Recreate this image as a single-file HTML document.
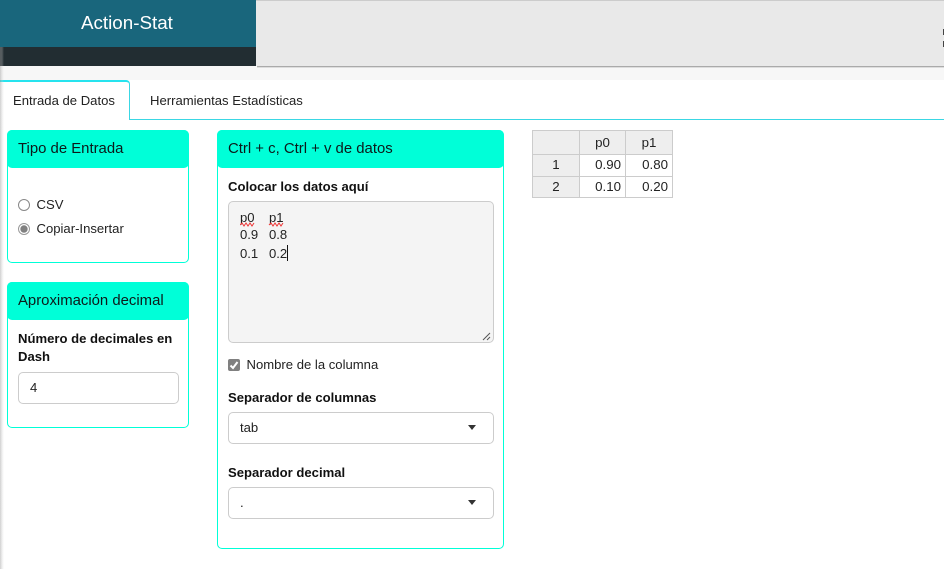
<!DOCTYPE html>
<html><head><meta charset="utf-8"><style>
html,body{margin:0;padding:0;background:#fff}
body{width:944px;height:569px;overflow:hidden;position:relative;font-family:"Liberation Sans",sans-serif;font-size:13.1px;color:#222}
.a{position:absolute;white-space:nowrap}
.box{position:absolute;box-sizing:border-box;border:1px solid #00ffd8;border-radius:5px;background:#fff}
.hd{position:absolute;left:-1px;right:-1px;top:-1px;height:38px;background:#00ffd8;border-radius:5px;font-size:14.9px;line-height:38px;padding-left:11px;color:#0c1a1a;box-sizing:border-box}
.b{font-weight:bold;color:#111}
.in{position:absolute;box-sizing:border-box;border:1px solid #ccc;border-radius:5px;background:#fff}
.car{position:absolute;width:0;height:0;border-left:4.500px solid transparent;border-right:4.500px solid transparent;border-top:5px solid #333}
.c{position:absolute;box-sizing:border-box;border:1px solid #ccc;line-height:19px;text-align:right;padding-right:4px;background:#fff;color:#222;font-size:13.3px}
.g{background:#eee;text-align:center;padding:0}
</style></head><body>
<div class="a" style="left:0;top:66px;width:944px;height:14px;background:#f7f7f7"></div>
<div class="a" style="left:0;top:47px;width:256px;height:19px;background:#222d32"></div>
<div class="a" style="left:0;top:0;width:256px;height:47px;background:#19667c"></div>
<div class="a" style="left:256px;top:0;width:688px;height:66px;background:#e9e9e9;border-top:1px solid #ccc;box-sizing:border-box"></div>
<div class="a" style="left:257px;top:66px;width:687px;height:1px;background:#aaa"></div>
<div class="a" style="left:257px;top:67px;width:687px;height:1px;background:#ddd"></div>
<div class="a" style="left:943px;top:29px;width:1px;height:6px;background:#444"></div>
<div class="a" style="left:943px;top:41px;width:1px;height:6px;background:#444"></div>
<div class="a" style="left:81px;top:12px;font-size:18.8px;line-height:21px;color:#fff">Action-Stat</div>

<div class="a" style="left:130px;top:119px;width:814px;height:1px;background:#3ad7e4"></div>
<div class="a" style="left:0;top:80px;width:130px;height:40px;box-sizing:border-box;border-top:2px solid #26e3ee;border-right:1px solid #3ad7e4;border-top-right-radius:4px;background:#fff"></div>
<div class="a" style="left:13px;top:93px;line-height:15px;color:#222">Entrada de Datos</div>
<div class="a" style="left:150px;top:93px;line-height:15px;color:#222">Herramientas Estadísticas</div>

<div class="a" style="left:0;top:47px;width:4px;height:522px;background:linear-gradient(90deg,rgba(150,150,150,.45),rgba(200,200,200,.3) 50%,rgba(255,255,255,0))"></div>

<div class="box" style="left:7px;top:130px;width:182px;height:133px"><div class="hd">Tipo de Entrada</div></div>
<svg class="a" style="left:18px;top:199px" width="12" height="12"><circle cx="6" cy="6" r="5.500" fill="#fff" stroke="#888"/></svg>
<div class="a" style="left:36.500px;top:197px;line-height:15px">CSV</div>
<svg class="a" style="left:18px;top:223px" width="12" height="12"><circle cx="6" cy="6" r="5.500" fill="#fff" stroke="#999"/><circle cx="6" cy="6" r="3.700" fill="#808080"/></svg>
<div class="a" style="left:36.500px;top:221px;line-height:15px">Copiar-Insertar</div>

<div class="box" style="left:7px;top:282px;width:182px;height:146px"><div class="hd">Aproximación decimal</div></div>
<div class="a b" style="left:18px;top:330px;line-height:18px">Número de decimales en<br>Dash</div>
<div class="in" style="left:18px;top:372px;width:161px;height:32px"></div>
<div class="a" style="left:30px;top:380px;line-height:15px">4</div>

<div class="box" style="left:217px;top:130px;width:287px;height:419px"><div class="hd">Ctrl + c, Ctrl + v de datos</div></div>
<div class="a b" style="left:228px;top:178px;line-height:18px">Colocar los datos aquí</div>
<div class="in" style="left:228px;top:201px;width:266px;height:142px;background:#f4f4f4"></div>
<div class="a" style="left:240px;top:210px;line-height:16px">p0</div>
<div class="a" style="left:269px;top:210px;line-height:16px">p1</div>
<div class="a" style="left:240px;top:227px;line-height:16px">0.9</div>
<div class="a" style="left:269px;top:227px;line-height:16px">0.8</div>
<div class="a" style="left:240px;top:246px;line-height:16px">0.1</div>
<div class="a" style="left:269px;top:246px;line-height:16px">0.2</div>
<div class="a" style="left:287px;top:245px;width:1px;height:16px;background:#111"></div>
<svg class="a" style="left:240px;top:222px" width="46" height="6" fill="none" stroke="#e33" stroke-width="1"><path d="M0 3l2-2 2 3 2-3 2 3 2-3 2 3 2-3 M29 3l2-2 2 3 2-3 2 3 2-3 2 3 2-3"/></svg>
<svg class="a" style="left:482px;top:332px" width="10" height="9" stroke="#555" stroke-width="1"><path d="M1 8L8 1M5 8L8 5"/></svg>
<div class="a" style="left:228px;top:359px;width:12px;height:12px;background:#808080;border-radius:2px"></div>
<svg class="a" style="left:228px;top:359px" width="12" height="12" fill="none" stroke="#fff" stroke-width="2"><path d="M2.500 6.500L5 9L9.500 3"/></svg>
<div class="a" style="left:246.500px;top:357px;line-height:15px">Nombre de la columna</div>
<div class="a b" style="left:228px;top:389px;line-height:18px">Separador de columnas</div>
<div class="in" style="left:228px;top:412px;width:266px;height:32px"></div>
<div class="a" style="left:240px;top:420px;line-height:15px">tab</div>
<div class="car" style="left:468px;top:425px"></div>
<div class="a b" style="left:228px;top:464px;line-height:18px">Separador decimal</div>
<div class="in" style="left:228px;top:487px;width:266px;height:32px"></div>
<div class="a" style="left:240px;top:495px;line-height:15px">.</div>
<div class="car" style="left:468px;top:500px"></div>

<div class="c g" style="left:532px;top:130px;width:48px;height:25px"></div>
<div class="c g" style="left:579px;top:130px;width:47px;height:25px;line-height:23px">p0</div>
<div class="c g" style="left:625px;top:130px;width:48px;height:25px;line-height:23px">p1</div>
<div class="c g" style="left:532px;top:154px;width:48px;height:23px">1</div>
<div class="c" style="left:579px;top:154px;width:47px;height:23px">0.90</div>
<div class="c" style="left:625px;top:154px;width:48px;height:23px">0.80</div>
<div class="c g" style="left:532px;top:176px;width:48px;height:22px">2</div>
<div class="c" style="left:579px;top:176px;width:47px;height:22px">0.10</div>
<div class="c" style="left:625px;top:176px;width:48px;height:22px">0.20</div>
</body></html>
